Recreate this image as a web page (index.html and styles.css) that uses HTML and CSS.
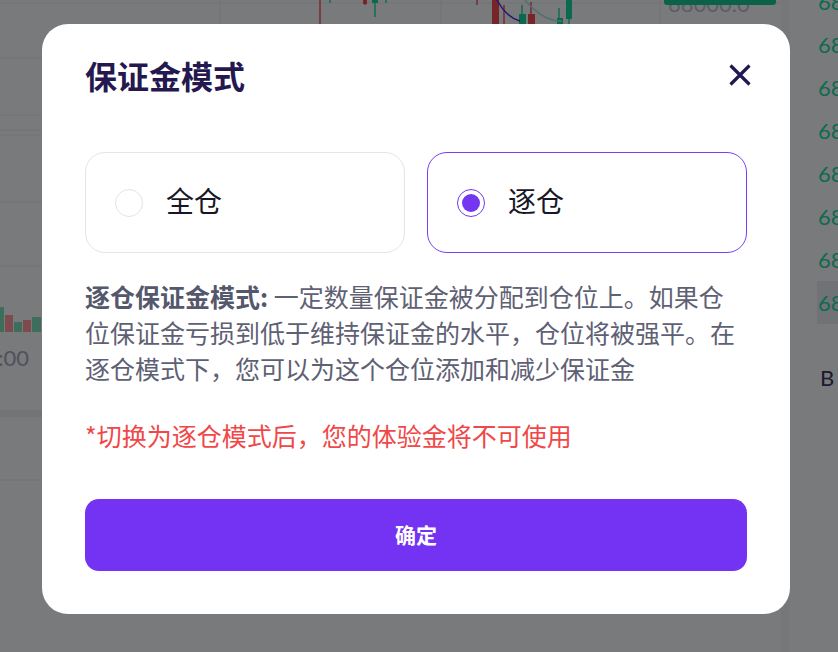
FILE: index.html
```html
<!DOCTYPE html>
<html lang="zh-CN">
<head>
  <meta charset="UTF-8" />
  <meta name="viewport" content="width=device-width, initial-scale=1.0"/>
  <title>保证金模式</title>
  <link rel="stylesheet" href="styles.css">
</head>
<body>
  <div class="page">
    <div class="chart">
      <svg class="chart-svg" width="790" height="652" viewBox="0 0 790 652">
        <g class="grid">
          <line x1="0" y1="3" x2="790" y2="3"/>
          <line x1="0" y1="58" x2="790" y2="58"/>
          <line x1="0" y1="115" x2="790" y2="115"/>
          <line x1="0" y1="130" x2="790" y2="130"/>
          <line x1="0" y1="135" x2="790" y2="135"/>
          <line x1="0" y1="202" x2="790" y2="202"/>
          <line x1="0" y1="266" x2="790" y2="266"/>
          <line x1="0" y1="480" x2="790" y2="480"/>
          <line x1="220" y1="0" x2="220" y2="266"/>
          <line x1="441" y1="0" x2="441" y2="266"/>
          <line x1="660" y1="0" x2="660" y2="266"/>
        </g>
        <rect class="band" x="0" y="410" width="790" height="7"/>
        <rect class="side" x="781" y="0" width="9" height="652"/>
        <!-- candles -->
        <g class="up">
          <line x1="375" y1="0" x2="375" y2="17"/>
          <rect x="372" y="0" width="6" height="3"/>
          <line x1="522" y1="5" x2="522" y2="24"/>
          <rect x="519" y="14" width="7" height="10"/>
          <line x1="559" y1="8" x2="559" y2="24"/>
          <rect x="557" y="18" width="6" height="6"/>
          <line x1="569" y1="0" x2="569" y2="24"/>
          <rect x="566" y="0" width="6" height="19"/>
          <line x1="330" y1="0" x2="330" y2="3"/>
          <line x1="386" y1="0" x2="386" y2="3"/>
        </g>
        <g class="down">
          <line x1="320" y1="0" x2="320" y2="24"/>
          <line x1="365" y1="0" x2="365" y2="5"/>
          <rect x="363" y="0" width="4" height="4"/>
          <line x1="477" y1="0" x2="477" y2="5"/>
          <rect x="492" y="0" width="7" height="24"/>
          <line x1="504" y1="5" x2="504" y2="24"/>
          <line x1="531" y1="2" x2="531" y2="24"/>
          <rect x="528" y="14" width="7" height="10"/>
        </g>
        <path class="ma1" d="M497 0 Q506 17 520 21"/>
        <path class="ma2" d="M525 0 Q544 22 562 21"/>
        <text class="axis-price" x="668" y="12">68000.0</text>
        <rect class="price-tag" x="664" y="-10" width="112" height="15" rx="3"/>
        <!-- volume -->
        <g class="vol-up">
          <rect x="0" y="307" width="4" height="25"/>
          <rect x="14" y="322" width="8" height="10"/>
          <rect x="32" y="317" width="9" height="15"/>
        </g>
        <g class="vol-down">
          <rect x="5" y="315" width="8" height="17"/>
          <rect x="23" y="320" width="8" height="12"/>
        </g>
        <text class="axis-time" x="29" y="366" text-anchor="end">12:00</text>
      </svg>
    </div>
    <div class="book">
      <div class="book-row">68012.5</div>
      <div class="book-row">68011.0</div>
      <div class="book-row">68010.5</div>
      <div class="book-row">68009.0</div>
      <div class="book-row">68008.5</div>
      <div class="book-row">68007.0</div>
      <div class="book-row">68006.5</div>
      <div class="book-row book-row-hl">68005.0</div>
      <div class="book-side">B</div>
    </div>
  </div>

  <div class="mask">
    <div class="modal">
      <div class="modal-head">
        <h2 class="modal-title">保证金模式</h2>
        <button class="modal-close" aria-label="关闭">
          <svg width="24" height="24" viewBox="0 0 24 24">
            <path d="M2.5 2.5 L21.5 21.5 M21.5 2.5 L2.5 21.5" stroke="#22184e" stroke-width="3.2" fill="none"/>
          </svg>
        </button>
      </div>

      <div class="options">
        <div class="option">
          <span class="radio"></span>
          <span class="option-label">全仓</span>
        </div>
        <div class="option option-active">
          <span class="radio radio-on"></span>
          <span class="option-label">逐仓</span>
        </div>
      </div>

      <p class="desc"><b>逐仓保证金模式:</b> 一定数量保证金被分配到仓位上。如果仓位保证金亏损到低于维持保证金的水平，仓位将被强平。在逐仓模式下，您可以为这个仓位添加和减少保证金</p>
      <p class="warn">*切换为逐仓模式后，您的体验金将不可使用</p>

      <button class="confirm">确定</button>
    </div>
  </div>
</body>
</html>
```

FILE: styles.css
```css
body {
  margin: 0;
  font-family: "Noto Sans CJK SC", "Noto Sans", sans-serif;
  background-color: #f3f4f8;
  overflow: hidden;
}
.page {
  display: flex;
  width: 838px;
  height: 652px;
  overflow: hidden;
}
.chart {
  width: 790px;
  flex: none;
}
.chart-svg {
  display: block;
}
.grid line {
  stroke: #e4e6ec;
  stroke-width: 1;
}
.band {
  fill: #e6e8ed;
}
.side {
  fill: #eceef2;
}
.up line, .down line {
  stroke-width: 1.4;
}
.up line { stroke: #16d49c; }
.up rect { fill: #16d49c; }
.down line { stroke: #f04a55; }
.down rect { fill: #f04a55; }
.ma1 {
  fill: none;
  stroke: #4a2cf0;
  stroke-width: 1.5;
}
.ma2 {
  fill: none;
  stroke: #9ee0e0;
  stroke-width: 1.5;
}
.axis-price {
  font-family: "Lato", sans-serif;
  font-size: 22px;
  fill: #b9bccb;
}
.price-tag {
  fill: #16c48f;
}
.vol-up rect { fill: #7adcb8; }
.vol-down rect { fill: #fa949a; }
.axis-time {
  font-family: "Lato", sans-serif;
  font-size: 22px;
  fill: #9ea2bb;
}
.book {
  flex: none;
  width: 200px;
  padding-left: 28px;
  margin-top: -20px;
  font-family: "Lato", sans-serif;
  font-size: 22px;
}
.book-row {
  height: 43px;
  line-height: 43px;
  color: #1cd6a0;
}
.book-row-hl {
  background-color: #e3e5ea;
  margin-left: -1px;
  padding-left: 1px;
}
.book-side {
  margin-top: 37px;
  padding-left: 2px;
  line-height: 34px;
  color: #3a3662;
}

/* modal */
.mask {
  position: fixed;
  inset: 0;
  background: rgba(0, 0, 0, 0.5);
  padding: 24px 0 0 42px;
}
.modal {
  width: 748px;
  height: 590px;
  box-sizing: border-box;
  background: #fff;
  border-radius: 26px;
  padding: 29px 43px 43px;
}
.modal-head {
  display: flex;
  align-items: center;
  justify-content: space-between;
  height: 44px;
}
.modal-title {
  margin: 0;
  font-size: 32px;
  line-height: 44px;
  font-weight: 700;
  color: #24184f;
}
.modal-close {
  border: none;
  background: none;
  padding: 0;
  margin-right: -5px;
  margin-top: -1px;
  width: 24px;
  height: 24px;
  cursor: pointer;
}
.modal-close svg {
  display: block;
}
.options {
  display: grid;
  grid-template-columns: 1fr 1fr;
  gap: 22px;
  margin-top: 55px;
}
.option {
  display: flex;
  align-items: center;
  height: 101px;
  box-sizing: border-box;
  border: 1px solid #e4e5ea;
  border-radius: 20px;
  padding-left: 29px;
}
.option-active {
  border-color: #7a3ff2;
}
.radio {
  width: 28px;
  height: 28px;
  box-sizing: border-box;
  border: 1px solid #e2e3ea;
  border-radius: 50%;
  display: flex;
  align-items: center;
  justify-content: center;
}
.radio-on {
  border-color: #7436f0;
}
.radio-on::after {
  content: "";
  width: 18px;
  height: 18px;
  border-radius: 50%;
  background: #7436f0;
}
.option-label {
  margin-left: 23px;
  padding-bottom: 6px;
  font-size: 28px;
  line-height: 40px;
  color: #171726;
}
.desc {
  margin: 25px 0 0;
  font-size: 25px;
  line-height: 36px;
  color: #5e6074;
}
.desc b {
  font-weight: 700;
  color: #55586c;
}
.warn {
  margin: 31px 0 0;
  font-size: 25px;
  line-height: 36px;
  color: #f04848;
}
.confirm {
  display: block;
  width: 100%;
  height: 72px;
  margin-top: 46px;
  padding-bottom: 3px;
  border: none;
  border-radius: 14px;
  background: #7433f3;
  color: #fff;
  font-family: inherit;
  font-size: 21px;
  font-weight: 700;
  cursor: pointer;
}
```
